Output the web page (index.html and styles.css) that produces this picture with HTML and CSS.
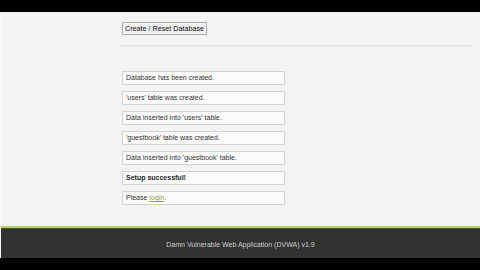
FILE: index.html
```html
<!DOCTYPE html>
<html lang="en">
<head>
  <meta charset="UTF-8" />
  <title>Setup :: Damn Vulnerable Web Application (DVWA) v1.9</title>
  <link rel="stylesheet" href="styles.css">
</head>
<body>
  <div class="page">
    <div class="main">
      <form class="setup-form">
        <button type="button" class="reset-btn">Create / Reset Database</button>
      </form>
      <hr class="divider" />

      <div class="messages">
        <div class="message">Database has been created.</div>
        <div class="message">'users' table was created.</div>
        <div class="message">Data inserted into 'users' table.</div>
        <div class="message">'guestbook' table was created.</div>
        <div class="message">Data inserted into 'guestbook' table.</div>
        <div class="message"><strong>Setup successful!</strong></div>
        <div class="message">Please <a href="#">login</a>.</div>
      </div>
    </div>

    <div class="footer">
      <p>Damn Vulnerable Web Application (DVWA) v1.9</p>
    </div>
  </div>
</body>
</html>
```

FILE: styles.css
```css
body {
  margin: 0;
  padding: 12px 0;
  background: #000;
  font-family: "Liberation Sans", Arial, sans-serif;
  font-size: 7px;
  color: #333;
}

.page {
  height: 246px;
  display: flex;
  flex-direction: column;
  background: #f3f3f3;
  border-left: 1px solid #fafafa;
}

.main {
  flex: 1;
  padding: 10px 8px 0 121px;
}

.setup-form {
  margin: 0;
}

.reset-btn {
  height: 13px;
  padding: 0 2px;
  font-family: inherit;
  font-size: 7.2px;
  color: #111;
  background: #ededed;
  border: 1px solid #a9a9a9;
  border-radius: 1px;
  box-shadow: inset 0 0 0 1px #f7f7f7;
}

.divider {
  margin: 10px 0 0 -2px;
  border: none;
  border-top: 1px solid #e2e2e2;
  box-shadow: 0 1px 1px #ececec;
}

.messages {
  margin-top: 25px;
  display: flex;
  flex-direction: column;
  gap: 6px;
  width: 163px;
}

.message {
  height: 12px;
  line-height: 12px;
  padding: 0 3px;
  background: #fbfbfb;
  border: 1px solid #d2d2d2;
  white-space: nowrap;
}

.message strong {
  color: #222;
}

.message a {
  color: #8aa33a;
}

.footer {
  height: 30px;
  border-top: 2px solid #b7d36c;
  box-shadow: inset 0 1px 0 #4b5a22;
  background: #323232;
  display: flex;
  align-items: center;
  justify-content: center;
}

.footer p {
  margin: 0;
  padding-top: 2px;
  font-size: 7px;
  color: #cfcfcf;
}
```
